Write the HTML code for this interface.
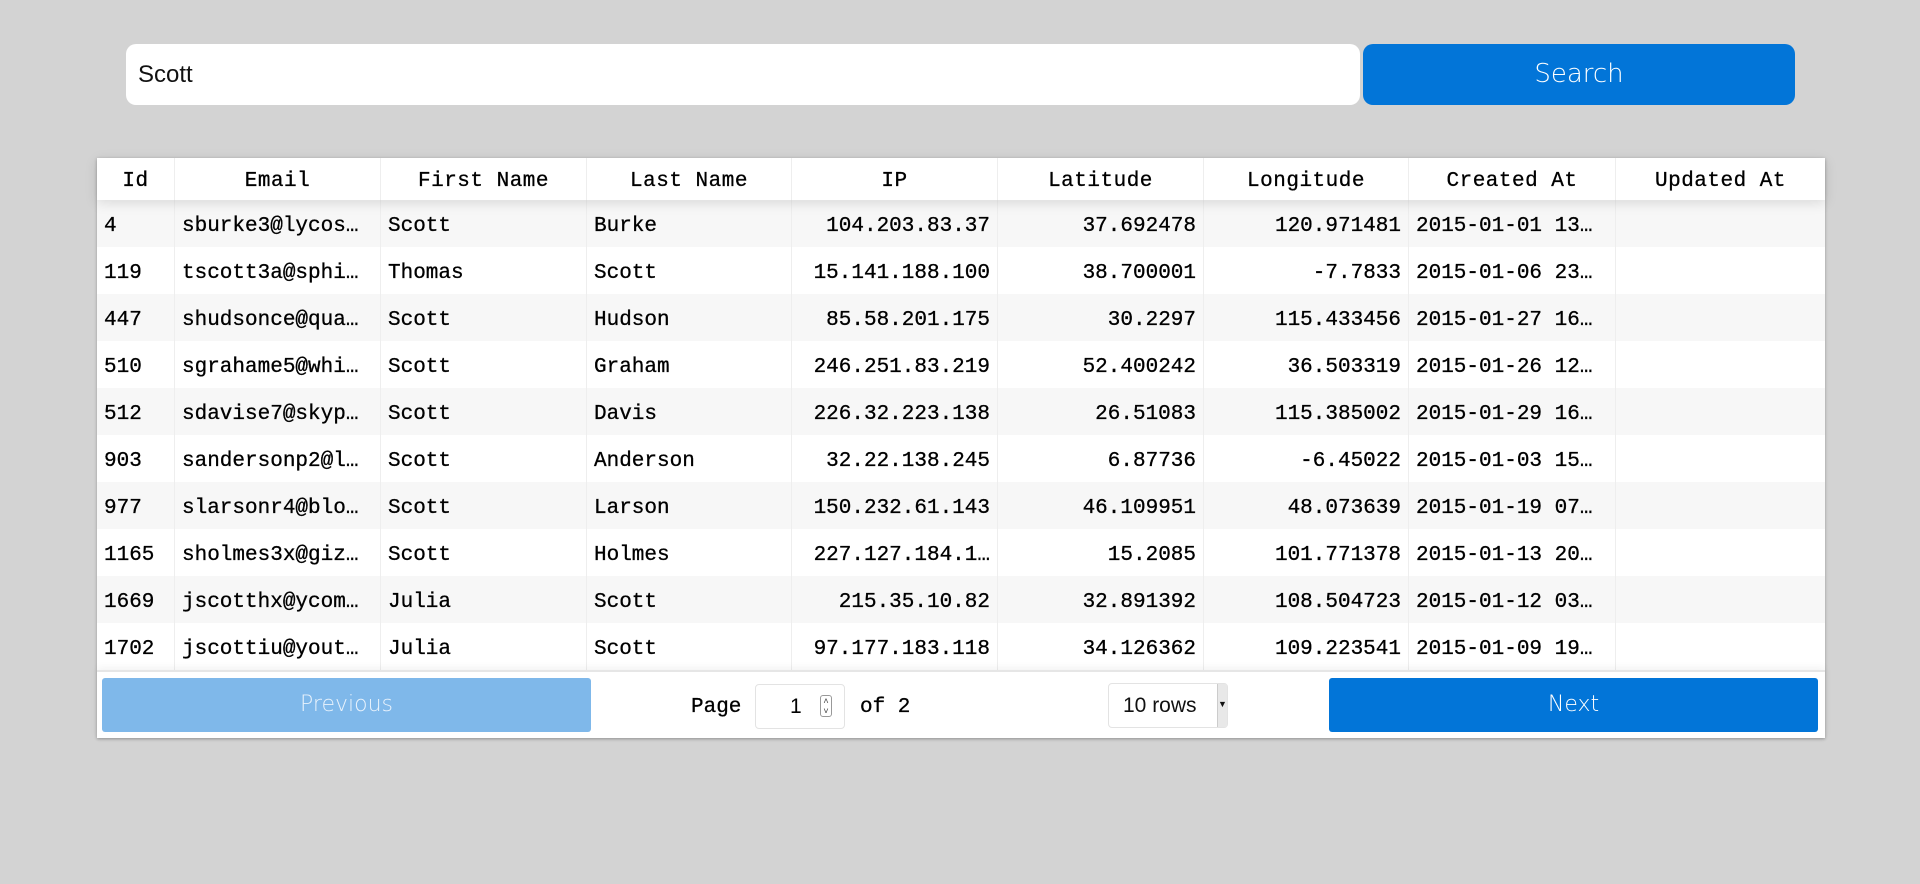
<!DOCTYPE html>
<html><head><meta charset="utf-8"><style>
*{box-sizing:border-box;margin:0;padding:0}
body{width:1920px;height:884px;background:#d3d3d3;position:relative;overflow:hidden;font-family:"Liberation Sans",sans-serif}
.inp{position:absolute;left:126px;top:44px;width:1234px;height:61px;background:#fff;border-radius:10px;font-size:24px;line-height:61px;padding-left:12px;color:#111}
.btn{position:absolute;left:1363px;top:44px;width:432px;height:61px;background:#0275d8;border-radius:10px;color:#fff;font-size:26px;line-height:61px;text-align:center;font-family:"DejaVu Sans","Liberation Sans",sans-serif;font-weight:300}
.tbl{position:absolute;left:97px;top:158px;width:1728px;height:580px;background:#fff;box-shadow:0 1px 3px rgba(0,0,0,.3)}
.row{display:flex;height:47px;font-family:"Liberation Mono",monospace;font-size:21px;color:#000;-webkit-text-stroke:0.3px #000}
.row div{flex:none;padding:3px 7px 0;line-height:47px;white-space:nowrap;overflow:hidden;border-right:1px solid #eee}
.hd{height:42px;box-shadow:0 3px 12px rgba(0,0,0,.12);position:relative;z-index:2;background:#fff}
.hd div{line-height:42px;text-align:center;letter-spacing:0.5px}
.row .r{text-align:right}
.odd{background:#f7f7f7}
.c0{width:78px}.c1{width:206px}.c2{width:206px}.c3{width:205px}.c4{width:206px}.c5{width:206px}.c6{width:205px}.c7{width:207px}.c8{width:209px;border-right:none!important}
.foot{position:absolute;left:0;top:512px;width:1728px;height:68px;border-top:2px solid #e6e6e6;box-shadow:0 -2px 8px rgba(0,0,0,.06)}
.prev{position:absolute;left:5px;top:6px;width:489px;height:54px;background:#7fb8ea;color:#e8f2fc;border-radius:3px;font-size:22px;line-height:54px;text-align:center;font-family:"DejaVu Sans",sans-serif;font-weight:300}
.next{position:absolute;left:1232px;top:6px;width:489px;height:54px;background:#0275d8;color:#fff;border-radius:3px;font-size:22px;line-height:54px;text-align:center;font-family:"DejaVu Sans",sans-serif;font-weight:300}
.pg{position:absolute;top:3px;line-height:66px;font-family:"Liberation Mono",monospace;font-size:21px;color:#000;-webkit-text-stroke:0.3px #000}
.num{position:absolute;left:658px;top:12px;width:90px;height:45px;border:1px solid #e3e3e3;border-radius:4px;font-size:21px;line-height:43px;font-family:"Liberation Sans",sans-serif}
.sel{position:absolute;left:1011px;top:11px;width:120px;height:45px;border:1px solid #e3e3e3;border-radius:4px;font-size:21px;line-height:43px;padding-left:14px;font-family:"Liberation Sans",sans-serif;color:#111}
</style></head><body>
<div class="inp">Scott</div>
<div class="btn">Search</div>
<div class="tbl">
<div class="row hd"><div class="c0">Id</div><div class="c1">Email</div><div class="c2">First Name</div><div class="c3">Last Name</div><div class="c4">IP</div><div class="c5">Latitude</div><div class="c6">Longitude</div><div class="c7">Created At</div><div class="c8">Updated At</div></div>
<div class="row odd"><div class="c0">4</div><div class="c1">sburke3@lycos…</div><div class="c2">Scott</div><div class="c3">Burke</div><div class="c4 r">104.203.83.37</div><div class="c5 r">37.692478</div><div class="c6 r">120.971481</div><div class="c7">2015-01-01 13…</div><div class="c8"></div></div>
<div class="row"><div class="c0">119</div><div class="c1">tscott3a@sphi…</div><div class="c2">Thomas</div><div class="c3">Scott</div><div class="c4 r">15.141.188.100</div><div class="c5 r">38.700001</div><div class="c6 r">-7.7833</div><div class="c7">2015-01-06 23…</div><div class="c8"></div></div>
<div class="row odd"><div class="c0">447</div><div class="c1">shudsonce@qua…</div><div class="c2">Scott</div><div class="c3">Hudson</div><div class="c4 r">85.58.201.175</div><div class="c5 r">30.2297</div><div class="c6 r">115.433456</div><div class="c7">2015-01-27 16…</div><div class="c8"></div></div>
<div class="row"><div class="c0">510</div><div class="c1">sgrahame5@whi…</div><div class="c2">Scott</div><div class="c3">Graham</div><div class="c4 r">246.251.83.219</div><div class="c5 r">52.400242</div><div class="c6 r">36.503319</div><div class="c7">2015-01-26 12…</div><div class="c8"></div></div>
<div class="row odd"><div class="c0">512</div><div class="c1">sdavise7@skyp…</div><div class="c2">Scott</div><div class="c3">Davis</div><div class="c4 r">226.32.223.138</div><div class="c5 r">26.51083</div><div class="c6 r">115.385002</div><div class="c7">2015-01-29 16…</div><div class="c8"></div></div>
<div class="row"><div class="c0">903</div><div class="c1">sandersonp2@l…</div><div class="c2">Scott</div><div class="c3">Anderson</div><div class="c4 r">32.22.138.245</div><div class="c5 r">6.87736</div><div class="c6 r">-6.45022</div><div class="c7">2015-01-03 15…</div><div class="c8"></div></div>
<div class="row odd"><div class="c0">977</div><div class="c1">slarsonr4@blo…</div><div class="c2">Scott</div><div class="c3">Larson</div><div class="c4 r">150.232.61.143</div><div class="c5 r">46.109951</div><div class="c6 r">48.073639</div><div class="c7">2015-01-19 07…</div><div class="c8"></div></div>
<div class="row"><div class="c0">1165</div><div class="c1">sholmes3x@giz…</div><div class="c2">Scott</div><div class="c3">Holmes</div><div class="c4 r">227.127.184.1…</div><div class="c5 r">15.2085</div><div class="c6 r">101.771378</div><div class="c7">2015-01-13 20…</div><div class="c8"></div></div>
<div class="row odd"><div class="c0">1669</div><div class="c1">jscotthx@ycom…</div><div class="c2">Julia</div><div class="c3">Scott</div><div class="c4 r">215.35.10.82</div><div class="c5 r">32.891392</div><div class="c6 r">108.504723</div><div class="c7">2015-01-12 03…</div><div class="c8"></div></div>
<div class="row"><div class="c0">1702</div><div class="c1">jscottiu@yout…</div><div class="c2">Julia</div><div class="c3">Scott</div><div class="c4 r">97.177.183.118</div><div class="c5 r">34.126362</div><div class="c6 r">109.223541</div><div class="c7">2015-01-09 19…</div><div class="c8"></div></div>
<div class="foot">
<div class="prev">Previous</div>
<div class="pg" style="left:594px">Page</div>
<div class="num"><span style="position:absolute;left:34px">1</span><span style="position:absolute;left:64px;top:10px;width:12px;height:22px;border:1px solid #999;border-radius:3px;font-size:9px;line-height:10px;text-align:center;color:#444">˄<br>˅</span></div>
<div class="pg" style="left:763px">of 2</div>
<div class="sel">10 rows<span style="position:absolute;right:0;top:0;width:10px;height:43px;background:#e8e8e8;border-left:1px solid #ccc;font-size:9px;line-height:41px;text-align:center">▼</span></div>
<div class="next">Next</div>
</div>
</div>
</body></html>
